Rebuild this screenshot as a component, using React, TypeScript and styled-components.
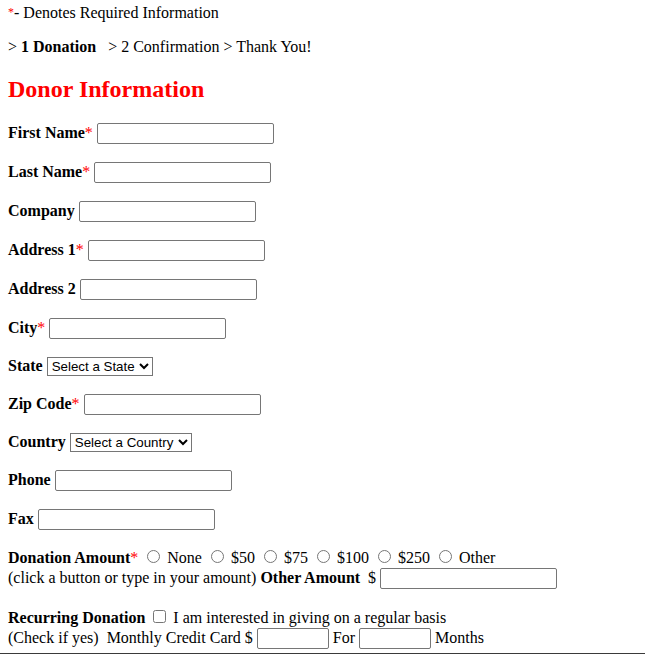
import React from "react";
import styled, { createGlobalStyle } from "styled-components";

const Global = createGlobalStyle`
  html, body { margin: 0; padding: 0; background: #fff; }
  body {
    font-family: "Liberation Serif", "Times New Roman", serif;
    font-size: 16px;
    color: #000;
    overflow: hidden;
  }
`;

const Page = styled.div`
  padding: 4px 8px 0 8px;
  height: 654px;
  box-sizing: border-box;
  display: flex;
  flex-direction: column;
`;

const Content = styled.div`
  flex: 1;
`;

const Note = styled.div`
  margin: 0;
`;

const Crumbs = styled.p`
  margin: 16px 0 0 0;
`;

const Heading = styled.h2`
  color: #ff0000;
  font-size: 24px;
  font-weight: bold;
  margin: 19.92px 0 19px 0;
`;

const Fields = styled.div`
  display: flex;
  flex-direction: column;
  gap: 16px;
`;

const Row = styled.div<{ $h: number }>`
  display: flex;
  align-items: center;
  height: ${(p) => p.$h}px;
`;

const Label = styled.b`
  font-weight: bold;
`;

const Req = styled.span<{ $small?: boolean }>`
  color: #ff0000;
  font-weight: normal;
  ${(p) => (p.$small ? "font-size: 12px; vertical-align: 2px;" : "")}
`;

const RowReq = styled(Req)`
  align-self: flex-start;
  margin-top: 2px;
`;

const TextInput = styled.input<{ $w?: number }>`
  width: ${(p) => p.$w ?? 177}px;
  height: 21px;
  box-sizing: border-box;
  border: 1px solid #767676;
  border-radius: 2px;
  padding: 1px 2px;
  font-size: 13.33px;
  font-family: Arial, "Liberation Sans", sans-serif;
  background: #fff;
  margin: 0;
`;

const FieldControl = styled.div`
  margin-left: 4px;
  display: flex;
`;

const Select = styled.select<{ $w: number }>`
  font-family: Arial, "Liberation Sans", sans-serif;
  font-size: 13.33px;
  width: ${(p) => p.$w}px;
  height: 19px;
  border: 1px solid #767676;
  border-radius: 0;
  background: #fff;
  color: #000;
  padding: 0;
  margin: 0;
`;

const Radio = styled.input`
  margin: 3px 3px 0 5px;
  width: 13px;
  height: 13px;
`;

const Check = styled.input`
  margin: 3px 3px 3px 4px;
  width: 13px;
  height: 13px;
`;

const Block = styled.p<{ $top: number }>`
  margin: ${(p) => p.$top}px 0 0 0;
  line-height: 20px;
`;

const BottomRule = styled.div`
  height: 1px;
  background: #3a3a3a;
  margin: 0 -8px;
`;

type Field = { label: string; req?: boolean; kind?: "state" | "country" };

const fields: Field[] = [
  { label: "First Name", req: true },
  { label: "Last Name", req: true },
  { label: "Company" },
  { label: "Address 1", req: true },
  { label: "Address 2" },
  { label: "City", req: true },
  { label: "State", kind: "state" },
  { label: "Zip Code", req: true },
  { label: "Country", kind: "country" },
  { label: "Phone" },
  { label: "Fax" },
];

const amounts = ["None", "$50", "$75", "$100", "$250", "Other"];

function Control({ kind }: { kind?: Field["kind"] }) {
  if (kind === "state")
    return (
      <Select $w={106} defaultValue="">
        <option value="">Select a State</option>
      </Select>
    );
  if (kind === "country")
    return (
      <Select $w={122} defaultValue="">
        <option value="">Select a Country</option>
      </Select>
    );
  return <TextInput type="text" />;
}

export default function App() {
  return (
    <>
      <Global />
      <Page>
        <Content>
          <Note>
            <Req $small>*</Req>- Denotes Required Information
          </Note>
          <Crumbs>
            &gt; <Label>1 Donation</Label>&nbsp;&nbsp; &gt; 2 Confirmation &gt; Thank You!
          </Crumbs>
          <Heading>Donor Information</Heading>
          <Fields>
            {fields.map((f) => (
              <Row key={f.label} $h={f.kind ? 21 : 23}>
                <Label>{f.label}</Label>
                {f.req ? <RowReq>*</RowReq> : null}
                <FieldControl>
                  <Control kind={f.kind} />
                </FieldControl>
              </Row>
            ))}
          </Fields>
          <Block $top={16}>
            <Label>Donation Amount</Label>
            <Req>*</Req>
            {amounts.map((a) => (
              <React.Fragment key={a}>
                {" "}
                <Radio type="radio" name="amt" /> {a}
              </React.Fragment>
            ))}
            <br />
            (click a button or type in your amount) <Label>Other Amount</Label>&nbsp; ${" "}
            <TextInput type="text" />
          </Block>
          <Block $top={18}>
            <Label>Recurring Donation</Label> <Check type="checkbox" /> I am interested in giving on a regular basis
            <br />
            (Check if yes)&nbsp; Monthly Credit Card $ <TextInput type="text" $w={72} /> For{" "}
            <TextInput type="text" $w={72} /> Months
          </Block>
        </Content>
        <BottomRule />
      </Page>
    </>
  );
}
